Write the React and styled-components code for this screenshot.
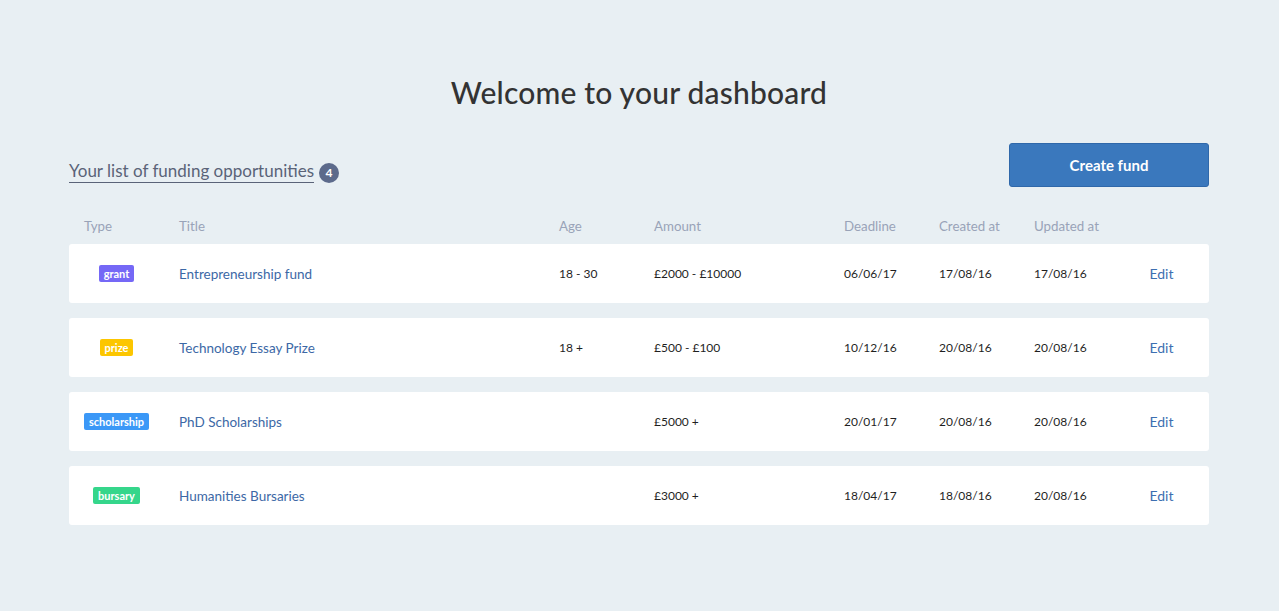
import React from "react";
import styled, { createGlobalStyle } from "styled-components";

const GlobalStyle = createGlobalStyle`
  body {
    margin: 0;
    background: #e8eff3;
    font-family: "Lato", "Liberation Sans", sans-serif;
    color: #222;
  }
`;

const funds = [
  { type: "grant", title: "Entrepreneurship fund", age: "18 - 30", amount: "£2000 - £10000", deadline: "06/06/17", created: "17/08/16", updated: "17/08/16" },
  { type: "prize", title: "Technology Essay Prize", age: "18 +", amount: "£500 - £100", deadline: "10/12/16", created: "20/08/16", updated: "20/08/16" },
  { type: "scholarship", title: "PhD Scholarships", age: "", amount: "£5000 +", deadline: "20/01/17", created: "20/08/16", updated: "20/08/16" },
  { type: "bursary", title: "Humanities Bursaries", age: "", amount: "£3000 +", deadline: "18/04/17", created: "18/08/16", updated: "20/08/16" }
];

const TYPE_COLORS = {
  grant: "#7568f6",
  prize: "#fcc600",
  scholarship: "#3b98f7",
  bursary: "#35d68b"
};

const Dashboard = () => {
  return (
    <Page>
      <GlobalStyle />
      <Container>
        <Heading>Welcome to your dashboard</Heading>

        <Toolbar>
          <ListTitle>
            <Underlined>Your list of funding opportunities</Underlined>
            <Count>4</Count>
          </ListTitle>
          <CreateButton>Create fund</CreateButton>
        </Toolbar>

        <HeadRow>
          <HeadCell>Type</HeadCell>
          <HeadCell>Title</HeadCell>
          <HeadCell>Age</HeadCell>
          <HeadCell>Amount</HeadCell>
          <HeadCell>Deadline</HeadCell>
          <HeadCell>Created at</HeadCell>
          <HeadCell>Updated at</HeadCell>
          <HeadCell />
        </HeadRow>

        {funds.map((fund) => (
          <Row key={fund.title}>
            <Cell $center>
              <TypeTag $color={TYPE_COLORS[fund.type]}>{fund.type}</TypeTag>
            </Cell>
            <Cell>
              <TitleLink>{fund.title}</TitleLink>
            </Cell>
            <Cell>{fund.age}</Cell>
            <Cell>{fund.amount}</Cell>
            <Cell>{fund.deadline}</Cell>
            <Cell>{fund.created}</Cell>
            <Cell>{fund.updated}</Cell>
            <Cell $center>
              <EditLink>Edit</EditLink>
            </Cell>
          </Row>
        ))}
      </Container>
    </Page>
  );
};

export default Dashboard;

// Styled Components
const Page = styled.div`
  min-height: 611px;
  padding: 74px 70px 0 69px;
  box-sizing: border-box;
`;

const Container = styled.div`
  width: 1140px;
`;

const Heading = styled.h1`
  margin: 0;
  text-align: center;
  font-size: 30px;
  line-height: 36px;
  font-weight: 500;
  color: #333;
  letter-spacing: 0.2px;
`;

const Toolbar = styled.div`
  display: flex;
  justify-content: space-between;
  align-items: flex-end;
  margin-top: 33px;
`;

const ListTitle = styled.div`
  display: flex;
  align-items: center;
  padding-bottom: 4px;
`;

const Underlined = styled.span`
  font-size: 17px;
  line-height: 22px;
  color: #5a6378;
  border-bottom: 1px solid #5a6378;
`;

const Count = styled.span`
  display: inline-flex;
  align-items: center;
  justify-content: center;
  width: 20px;
  height: 20px;
  margin-left: 5px;
  margin-top: 2px;
  border-radius: 50%;
  background: #5c6a8b;
  color: #fff;
  font-size: 12px;
  font-weight: 700;
`;

const CreateButton = styled.button`
  width: 200px;
  height: 44px;
  border: 1px solid #2f68aa;
  border-radius: 3px;
  background: #3a78bd;
  color: #fff;
  font-family: inherit;
  font-size: 15px;
  font-weight: 700;
  cursor: pointer;
`;

const grid = `
  display: grid;
  grid-template-columns: 95px 380px 95px 190px 95px 95px 95px 95px;
  align-items: center;
`;

const HeadRow = styled.div`
  ${grid}
  margin-top: 29px;
  margin-bottom: 8px;
  height: 20px;
`;

const HeadCell = styled.div`
  padding-left: 15px;
  font-size: 13.3px;
  color: #99a3b8;
`;

const Row = styled.div`
  ${grid}
  height: 59px;
  margin-bottom: 15px;
  background: #fff;
  border-radius: 3px;
`;

const Cell = styled.div`
  padding-left: ${(p) => (p.$center ? "0" : "15px")};
  text-align: ${(p) => (p.$center ? "center" : "left")};
  font-size: 12px;
  color: #1f1f1f;
`;

const TypeTag = styled.span`
  display: inline-block;
  padding: 0 5px;
  height: 17px;
  line-height: 17px;
  border-radius: 2px;
  background: ${(p) => p.$color};
  color: #fff;
  font-size: 11px;
  font-weight: 700;
`;

const TitleLink = styled.a`
  font-size: 13.5px;
  color: #3c68a6;
  cursor: pointer;
`;

const EditLink = styled.a`
  font-size: 14px;
  color: #3d6fb1;
  cursor: pointer;
`;
